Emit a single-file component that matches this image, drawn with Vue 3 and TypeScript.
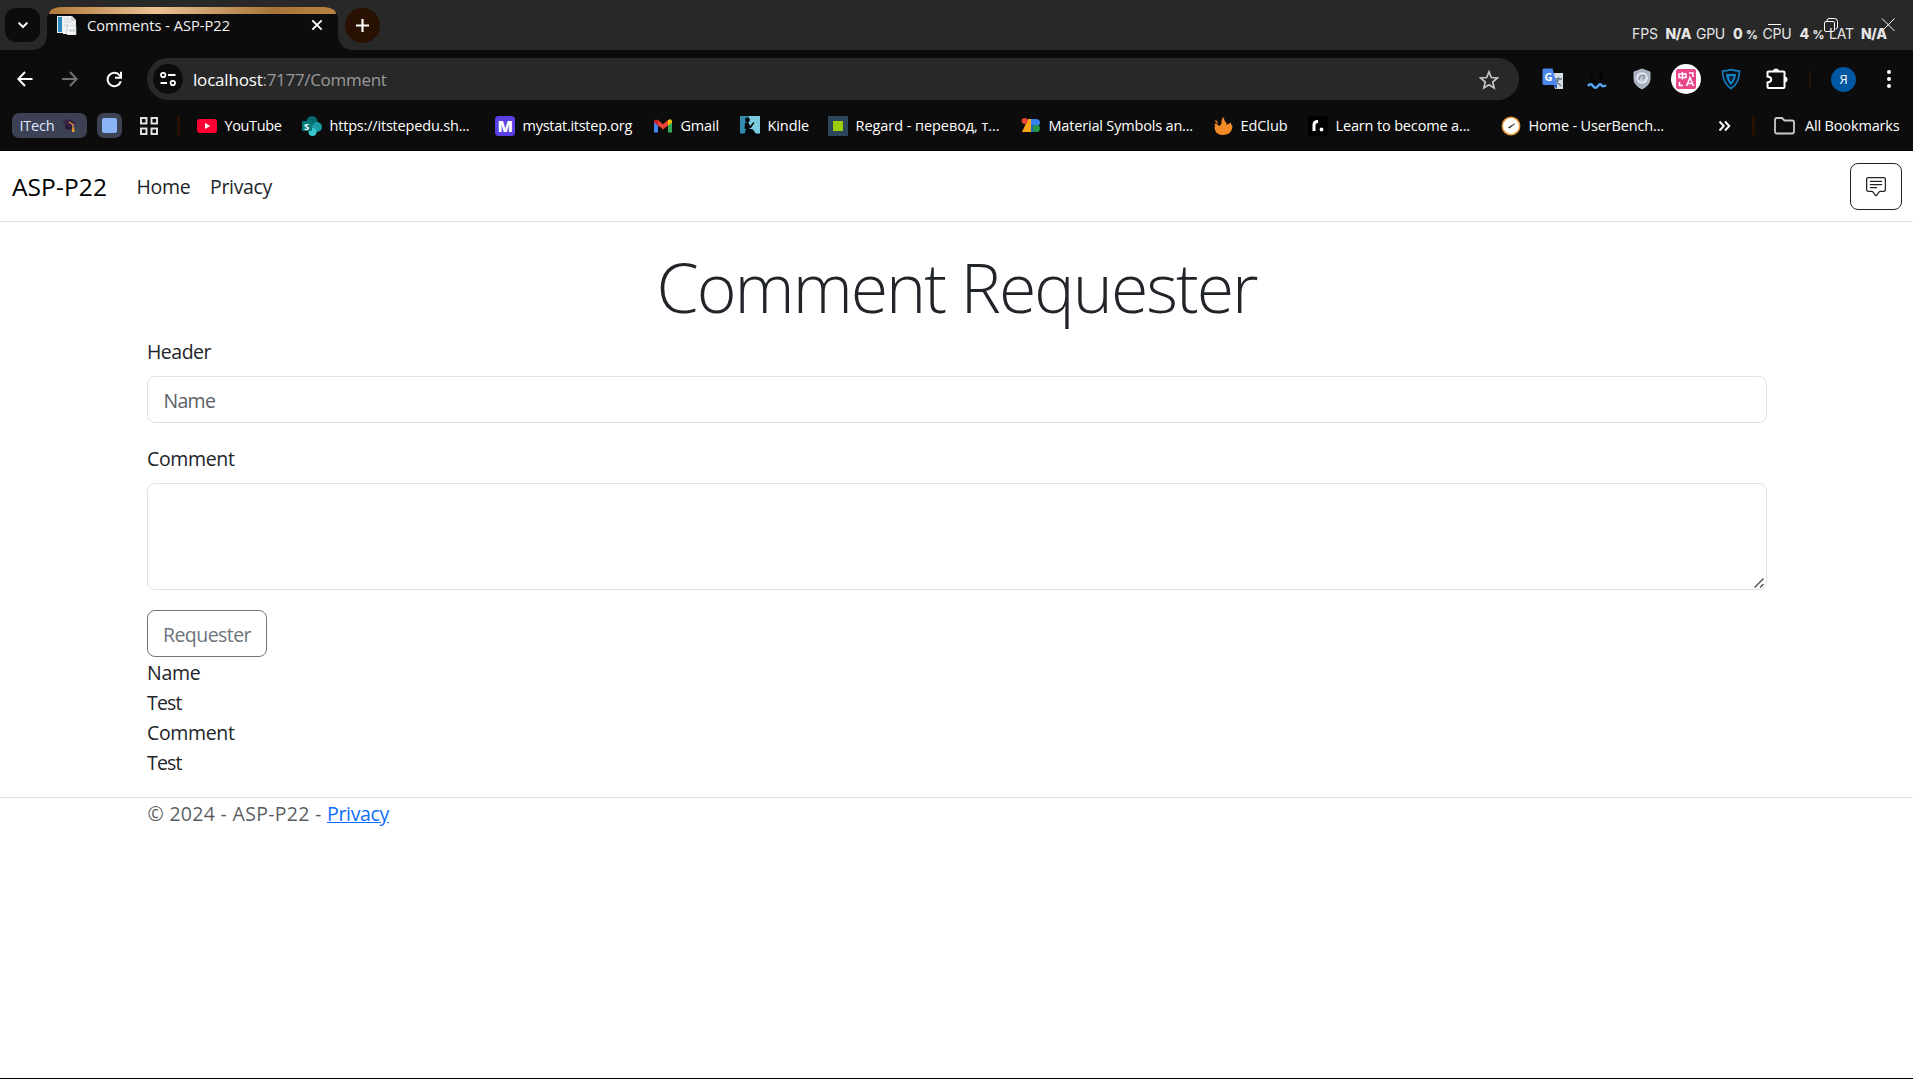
<script setup lang="ts">
import { ref } from 'vue'

interface Bookmark {
  icon: string
  label: string
  pitch: number
  text: number
}

const bookmarks: Bookmark[] = [
  { icon: 'youtube', label: 'YouTube', pitch: 105, text: 57 },
  { icon: 'sharepoint', label: 'https://itstepedu.sh...', pitch: 193, text: 140 },
  { icon: 'mystat', label: 'mystat.itstep.org', pitch: 158, text: 109.5 },
  { icon: 'gmail', label: 'Gmail', pitch: 87, text: 38.5 },
  { icon: 'kindle', label: 'Kindle', pitch: 88, text: 41.5 },
  { icon: 'regard', label: 'Regard - перевод, т...', pitch: 193, text: 144 },
  { icon: 'material', label: 'Material Symbols an...', pitch: 192, text: 144.5 },
  { icon: 'edclub', label: 'EdClub', pitch: 95, text: 47 },
  { icon: 'roadmap', label: 'Learn to become a...', pitch: 193, text: 134.5 },
  { icon: 'bench', label: 'Home - UserBench...', pitch: 217, text: 135.5 },
]

const header = ref('')
const comment = ref('')
const rows = ['Name', 'Test', 'Comment', 'Test']

// Spreads the letters of a label so that it takes up the given width.
const vFit = {
  mounted(el: HTMLElement, binding: { value: number }) {
    const count = (el.textContent ?? '').length
    const natural = el.getBoundingClientRect().width
    el.style.letterSpacing = `${(binding.value - natural) / count}px`
  },
}
</script>

<template>
  <div class="window">
    <div class="tabstrip">
      <button class="tab-search">
        <svg width="12" height="12" viewBox="0 0 12 12"><path d="M1.6 3.6 6 8l4.400-4.400" fill="none" stroke="#fff" stroke-width="2" /></svg>
      </button>
      <div class="tab">
        <div class="tab-theme"></div>
        <div class="tab-row">
          <svg class="favicon" width="20" height="20" viewBox="0 0 20 20">
            <path d="M0 1h12v17H0z" fill="#e6eef2" /><path d="M1 2h4v15H1z" fill="#2f88bd" />
            <path d="M5 1h10l4 4v14H6z" fill="#eef1f2" /><path d="M14 1v5h5" fill="#c8cdd0" />
            <path d="M7 4h5M7 7h7M7 10h4" stroke="#c7d1d6" /><path d="M10 11h9v9h-9z" fill="#f8f8f8" stroke="#bcc4c8" stroke-width=".7" /><path d="M12 14h6v3h-6z" fill="#d5dadd" />
          </svg>
          <span class="tab-title"><span v-fit="143" class="fit">Comments - ASP-P22</span></span>
          <svg class="tab-close" width="12" height="12" viewBox="0 0 12 12"><path d="m1.300 1.300 9.400 9.400M10.700 1.300l-9.400 9.400" stroke="#fff" stroke-width="1.900" /></svg>
        </div>
      </div>
      <button class="new-tab">
        <svg width="13" height="13" viewBox="0 0 13 13"><path d="M6.500 0v13M0 6.500h13" stroke="#fff" stroke-width="2.200" /></svg>
      </button>
      <div class="caption-buttons">
        <svg width="127" height="14" viewBox="0 0 127 14" fill="none" stroke="#fff">
          <path d="M0 6.500h13" />
          <rect x="56.500" y="3.500" width="10" height="10" rx="1.500" />
          <path d="M59 3.500V2.500Q59 .5 61 .5h5.500q3 0 3 3V9q0 2-2 2" />
          <path d="m114 .5 12.500 12.500M126.500.5 114 13" />
        </svg>
      </div>
      <div class="stats">
        <span class="metric fps"><span v-fit="26" class="fit">FPS</span></span>
        <b class="na"><span v-fit="25.500" class="fit">N/A</span></b>
        <span class="metric gpu"><span v-fit="29" class="fit">GPU</span></span>
        <b class="num">0</b><b class="pct">%</b>
        <span class="metric cpu"><span v-fit="29" class="fit">CPU</span></span>
        <b class="num">4</b><b class="pct">%</b>
        <span class="metric lat"><span v-fit="25" class="fit">LAT</span></span>
        <b class="na"><span v-fit="25.500" class="fit">N/A</span></b>
      </div>
    </div>

    <div class="toolbar">
      <svg class="nav" width="16" height="16" viewBox="0 0 16 16"><path d="M15.500 8H1.500M8 1 1.300 8 8 15" fill="none" stroke="#fff" stroke-width="2" /></svg>
      <svg class="nav" width="16" height="16" viewBox="0 0 16 16"><path d="M0 8h14M8 1l6.700 7L8 15" fill="none" stroke="#727272" stroke-width="2" /></svg>
      <svg class="nav" width="17" height="17" viewBox="0 0 17 17"><path d="M14.800 10.300A6.700 6.700 0 1 1 13.700 4.500L15 6" fill="none" stroke="#fff" stroke-width="2" /><path d="M15 .8v6H9" fill="none" stroke="#fff" stroke-width="2" /></svg>
      <div class="omnibox">
        <span class="site-info">
          <svg width="16" height="16" viewBox="0 0 16 16" fill="none" stroke="#fff" stroke-width="1.800"><circle cx="3.200" cy="4" r="2.200" /><path d="M8 4h7.500M.5 12H7" /><circle cx="12.800" cy="12" r="2.200" /></svg>
        </span>
        <span class="url"><span v-fit="69.500" class="fit host">localhost</span><span v-fit="124" class="fit">:7177/Comment</span></span>
        <svg class="star" width="20" height="20" viewBox="0 0 20 20"><path d="m10 1.800 2.300 5.700 6.100.5-4.700 4 1.500 6L10 14.800 4.800 18l1.500-6-4.700-4 6.100-.5z" fill="none" stroke="#c4c4c4" stroke-width="1.700" /></svg>
      </div>
      <div class="extensions">
        <svg width="22" height="22" viewBox="0 0 22 22"><path d="M9 5h12v16H13z" fill="#d7dde2" /><path d="M13 11h7M16.500 9v2c-.5 3-2 5-4 6M14 12c1 3 3 4 5 6" fill="none" stroke="#60788c" stroke-width="1.300" /><path d="m11 17 4 4v-4z" fill="#2453b5" /><path d="M2 .5h8.500L15 17H2q-1.500 0-1.500-1.500V2Q.5.5 2 .5" fill="#4c87ed" /><text x="2.500" y="13" font-size="11" font-weight="700" fill="#fff">G</text></svg>
        <svg class="lt" width="20" height="24" viewBox="0 0 20 24"><text x="2.500" y="15" font-size="13" font-weight="700" fill="#030303">LT</text><path d="M1 19q2.500-3.500 5 0t5 0q2.500-3.500 4 0 2 1 4-1" fill="none" stroke="#55a9f5" stroke-width="2.400" /></svg>
        <svg width="18" height="22" viewBox="0 0 18 22"><path d="m9 1 8 3v7q0 6-8 10-8-4-8-10V4z" fill="#a8b0c2" stroke="#d0d4df" stroke-width=".8" /><circle cx="9" cy="10" r="5" fill="#c3c9d7" stroke="#eef1f7" stroke-width="1.500" /><path d="M6 12a4 4 0 0 1 6-4l-2 3" fill="none" stroke="#8e98ac" stroke-width="1.500" /></svg>
        <span class="translate">
          <svg width="20" height="20" viewBox="0 0 20 20"><rect width="20" height="20" rx="2" fill="#e9478c" /><path d="M3 5h7v3.500H3zM6.500 3v7.500M13 4h4v4M3.500 13v3.500h3.500M10.500 17l3.500-8.500 3.500 8.500M12 14.500h4" fill="none" stroke="#fff" stroke-width="1.500" /></svg>
        </span>
        <svg width="20" height="22" viewBox="0 0 20 22"><path d="M10 1.500q5 1.500 8.500 1.500 0 12-8.500 17.500Q1.500 15 1.500 3 6 3 10 1.500" fill="#08131c" stroke="#1683c8" stroke-width="1.500" /><path d="M5 6h10q-.5 7-5 11Q5.500 13 5 6" fill="#1683c8" /><path d="M8 8h4.500q0 3-2.500 6-2-2-2-6" fill="#10212d" /></svg>
        <svg class="puzzle" width="22" height="22" viewBox="0 0 22 22"><path d="M2.500 3.500h15q1 0 1 1v14.500q0 1-1 1h-15q-1 0-1-1v-4.500c5-.5 5-5.500 0-6V4.500q0-1 1-1" fill="none" stroke="#fff" stroke-width="2" /><path d="M7 3.500a3 3 0 0 1 6 0M18.500 8.500a3 3 0 0 1 0 6" fill="#fff" /></svg>
        <i class="divider"></i>
        <span class="avatar">Я</span>
        <svg width="6" height="20" viewBox="0 0 6 20" fill="#fff"><circle cx="3" cy="3" r="2" /><circle cx="3" cy="10" r="2" /><circle cx="3" cy="17" r="2" /></svg>
      </div>
    </div>

    <div class="bookmarks">
      <span class="group"><span v-fit="35" class="fit">ITech</span>
        <svg width="15" height="15" viewBox="0 0 15 15"><path d="m0 4 7-3 8 4-7 3.500z" fill="#3b2144" /><path d="M3 6v4q3 3 7 1V7L8 8.500z" fill="#2c1936" /><path d="m7 4 4 2.500v6" fill="none" stroke="#e9a23b" stroke-width="1.200" /><path d="M10.300 10h1.800l.5 4H10z" fill="#e99a2d" /></svg>
      </span>
      <span class="group square"><i></i></span>
      <svg class="apps" width="18" height="18" viewBox="0 0 18 18" fill="none" stroke="#e8e8e8" stroke-width="1.900"><rect x="1" y="1" width="5.500" height="5.500" /><rect x="11.500" y="1" width="5.500" height="5.500" /><rect x="1" y="11.500" width="5.500" height="5.500" /><rect x="11.500" y="11.500" width="5.500" height="5.500" /></svg>
      <i class="divider"></i>
      <div class="links">
        <span v-for="b in bookmarks" :key="b.label" class="link" :style="{ width: b.pitch + 'px' }">
          <svg width="20" height="20" viewBox="0 0 20 20">
            <template v-if="b.icon === 'youtube'"><rect y="3" width="20" height="14" rx="3" fill="#ff0033" /><path d="m8 7 5.300 3L8 13z" fill="#fff" /></template>
            <template v-else-if="b.icon === 'sharepoint'"><circle cx="10" cy="5.500" r="5.500" fill="#036c70" /><circle cx="15" cy="11" r="5" fill="#1a9ba1" /><circle cx="10.500" cy="16" r="4" fill="#37c6d0" /><rect y="5" width="10" height="10" rx="1" fill="#03787c" /><text x="2" y="13.500" font-size="9.500" font-weight="700" fill="#fff">S</text></template>
            <template v-else-if="b.icon === 'mystat'"><rect width="20" height="20" rx="3.500" fill="#5840e5" /><text x="2.600" y="15.600" font-size="16" font-weight="800" fill="#fff">M</text></template>
            <template v-else-if="b.icon === 'gmail'"><path d="M1 5v11.500h4V8z" fill="#4285f4" /><path d="M19 5v11.500h-4V8z" fill="#34a853" /><path d="m1 5 4-1 5 4.200L15 4v5.500l-5 4-5-4V9L1 6z" fill="#ea4335" /><path d="M15 4q3-2 4 1v1.500l-4 3z" fill="#fbbc04" /><path d="M1 6q0-3 2.500-2.500L5 4.500v5L1 6.500z" fill="#c5221f" /></template>
            <template v-else-if="b.icon === 'kindle'"><rect width="20" height="20" fill="#328caf" /><path d="M9 0h11v18H8z" fill="#7dcbe0" /><path d="M0 17.500h20V20H0z" fill="#04080b" /><circle cx="7.500" cy="4" r="2.400" fill="#04080b" /><path d="M5 6.500h3.500l1.500 3.500 3.500-4 1 .8-3.500 5.200-2.500.5 4.500 1 3 4.500H4.500l1.500-5-1.500-.5z" fill="#04080b" /></template>
            <template v-else-if="b.icon === 'regard'"><rect width="20" height="20" fill="#2b465b" /><rect x="5" y="5" width="10" height="10" fill="#9bcd08" /></template>
            <template v-else-if="b.icon === 'material'"><path d="M7 3h3v13H1z" fill="#f9a514" /><circle cx="3.600" cy="5" r="3" fill="#ea4335" /><path d="M10 3h5q4 0 4 3.500T15 10h-5z" fill="#3680ed" /><path d="M10 9h4v7h-4z" fill="#1967d2" /><circle cx="15.200" cy="12.400" r="3.700" fill="#249445" /></template>
            <template v-else-if="b.icon === 'edclub'"><path d="M1.500 7.500q2.500-.5 4.500 2.500 3-1 2.500-5Q9 1.500 11.500 1q-1.500 2 .3 4 2.700 2 1.700 4l4.500-2.500q-.5 2 1.500 3.500-.5 8.500-9 9-8 .5-9-7 1-1 0-4.500" fill="#f28a25" /><path d="M2 4q3 0 3 4-3-1-3-4" fill="#bc5b22" /></template>
            <template v-else-if="b.icon === 'roadmap'"><rect width="20" height="20" rx="2" fill="#000" /><path d="M6 15V9q0-3.500 4-3.500" fill="none" stroke="#fff" stroke-width="3" /><circle cx="13.500" cy="13.500" r="1.900" fill="#fff" /></template>
            <template v-else><circle cx="10" cy="10" r="8.700" fill="#fff" stroke="#e79a3c" stroke-width="1.500" /><path d="m7.500 11.500 6-3.500-5 4z" fill="#222" stroke="#222" stroke-width=".7" /></template>
          </svg>
          <span v-fit="b.text" class="fit">{{ b.label }}</span>
        </span>
      </div>
      <svg class="more" width="13" height="12" viewBox="0 0 13 12"><path d="m1.500 1.500 4.300 4.500-4.300 4.500M7 1.500 11.300 6 7 10.500" fill="none" stroke="#fff" stroke-width="1.900" /></svg>
      <i class="divider late"></i>
      <svg class="folder" width="21" height="18" viewBox="0 0 21 18"><path d="M1 3q0-2 2-2h5l2.500 2.500H18q2 0 2 2V14.500q0 2-2 2H3q-2 0-2-2z" fill="none" stroke="#c9c9c9" stroke-width="1.800" /></svg>
      <span v-fit="94.500" class="fit">All Bookmarks</span>
    </div>

    <nav class="navbar">
      <a class="brand"><span v-fit="95" class="fit">ASP-P22</span></a>
      <a class="home"><span v-fit="54" class="fit">Home</span></a>
      <a class="privacy"><span v-fit="62" class="fit">Privacy</span></a>
      <button class="chat">
        <svg width="20" height="20" viewBox="0 0 16 16" fill="#212529"><path d="M14 1a1 1 0 0 1 1 1v8a1 1 0 0 1-1 1h-2.500a2 2 0 0 0-1.600.8L8 14.333 6.100 11.800a2 2 0 0 0-1.600-.8H2a1 1 0 0 1-1-1V2a1 1 0 0 1 1-1zM2 0a2 2 0 0 0-2 2v8a2 2 0 0 0 2 2h2.500a1 1 0 0 1 .8.4l1.900 2.533a1 1 0 0 0 1.600 0l1.900-2.533a1 1 0 0 1 .8-.4H14a2 2 0 0 0 2-2V2a2 2 0 0 0-2-2z" /><path d="M3 3.500a.5.5 0 0 1 .5-.5h9a.5.5 0 0 1 0 1h-9a.5.5 0 0 1-.5-.5M3 6a.5.5 0 0 1 .5-.5h9a.5.5 0 0 1 0 1h-9A.5.5 0 0 1 3 6m0 2.500a.5.5 0 0 1 .5-.5h5a.5.5 0 0 1 0 1h-5a.5.5 0 0 1-.5-.5" /></svg>
      </button>
    </nav>

    <main>
      <h1><span v-fit="600" class="fit">Comment Requester</span></h1>
      <label class="first"><span v-fit="64" class="fit">Header</span></label>
      <input v-model="header" type="text" placeholder="Name" />
      <label class="second"><span v-fit="87.500" class="fit">Comment</span></label>
      <div class="area">
        <textarea v-model="comment"></textarea>
        <svg class="grip" width="12" height="12" viewBox="0 0 12 12"><path d="m1.500 10.500 9-9M7 10.500l3.500-3.500" stroke="#555" stroke-width="1.500" /></svg>
      </div>
      <button class="request"><span v-fit="88" class="fit">Requester</span></button>
      <div class="rows">
        <div v-for="(row, i) in rows" :key="i" class="row"><span v-fit="row === 'Comment' ? 87.500 : row === 'Name' ? 53.500 : 34.500" class="fit">{{ row }}</span></div>
      </div>
    </main>
    <footer>
      <span v-fit="179.500" class="fit">© 2024 - ASP-P22 - </span><a><span v-fit="62" class="fit">Privacy</span></a>
    </footer>
  </div>
</template>

<style>
body {
  margin: 0;
  overflow: hidden;
}
</style>

<style scoped>
* {
  box-sizing: border-box;
}
.window {
  height: 1079px;
  display: flex;
  flex-direction: column;
  background: #fff;
  border-bottom: 1px solid #000;
  color: #212529;
  font-family: "Open Sans", "Noto Sans", sans-serif;
  font-size: 19.5px;
  line-height: 30px;
  position: relative;
}
button {
  padding: 0;
  border: 0;
  font: inherit;
  display: flex;
  align-items: center;
  justify-content: center;
}
svg {
  flex: none;
  display: block;
}
.fit {
  display: inline-block;
  white-space: pre;
  flex: none;
}

.tabstrip {
  height: 50px;
  flex: none;
  background: #282828;
  display: flex;
  position: relative;
}
.tab-search {
  width: 35px;
  height: 34px;
  margin: 8px 0 0 5px;
  border-radius: 11px;
  background: #0c0c0c;
}
.tab {
  width: 291px;
  height: 43px;
  margin: 7px 0 0 7px;
  background: #0c0c0c;
  border-radius: 12px 12px 0 0;
  position: relative;
}
.tab::before,
.tab::after {
  content: "";
  position: absolute;
  bottom: 0;
  width: 14px;
  height: 14px;
}
.tab::before {
  left: -14px;
  background: radial-gradient(circle at 0 0, transparent 13.500px, #0c0c0c 14px);
}
.tab::after {
  right: -14px;
  background: radial-gradient(circle at 100% 0, transparent 13.500px, #0c0c0c 14px);
}
.tab-theme {
  height: 7px;
  border-radius: 12px 12px 0 0 / 7px 7px 0 0;
  margin: 0 2px;
  background: linear-gradient(90deg, #b07839, #ebc394 37%, #a87539 78%, #b9813f);
}
.tab-row {
  display: flex;
  align-items: center;
  height: 22px;
  padding-left: 10px;
  color: #f4f4f4;
  font-size: 14.600px;
}
.tab-title {
  width: 223px;
  padding-left: 10px;
  flex: none;
}
.tab-close {
  margin-left: 11px;
}
.new-tab {
  width: 35px;
  height: 35px;
  margin: 8px 0 0 7px;
  border-radius: 50%;
  background: #281002;
}
.caption-buttons {
  position: absolute;
  left: 1768px;
  top: 18px;
}
.stats {
  position: absolute;
  left: 1632px;
  top: 24px;
  display: flex;
  align-items: baseline;
  line-height: 19px;
  font-family: Inter, sans-serif;
  font-size: 14px;
  color: #e6e6e6;
  white-space: nowrap;
}
.fps {
  width: 33.500px;
}
.na {
  width: 30.500px;
  font-weight: 800;
}
.gpu {
  width: 37px;
}
.cpu {
  width: 37px;
}
.lat {
  width: 32px;
}
.num {
  width: 13px;
  font-weight: 800;
}
.pct {
  width: 16.500px;
  font-size: 11.500px;
  font-weight: 800;
}

.toolbar {
  height: 58px;
  flex: none;
  background: #0c0c0c;
  display: flex;
  align-items: center;
  padding-left: 17px;
}
.nav {
  margin-right: 29px;
}
.nav:nth-child(2) {
  margin-right: 28px;
}
.nav:nth-child(3) {
  margin-right: 24px;
}
.omnibox {
  width: 1372px;
  height: 42px;
  border-radius: 21px;
  background: #282828;
  display: flex;
  align-items: center;
  padding: 0 20px 0 6px;
}
.site-info {
  width: 30px;
  height: 30px;
  border-radius: 50%;
  background: #0c0c0c;
  display: flex;
  align-items: center;
  justify-content: center;
}
.url {
  margin-left: 10px;
  padding-top: 1px;
  font-size: 17px;
  color: #9a9a9a;
  display: flex;
}
.host {
  color: #fff;
}
.star {
  margin: 1px 0 0 auto;
}
.extensions {
  display: flex;
  align-items: center;
  margin-left: 22.500px;
  gap: 24px;
}
.extensions .lt {
  margin-left: -0.5px;
}
.extensions svg:nth-child(3) {
  margin-left: 2px;
}
.translate {
  width: 30px;
  height: 30px;
  margin: 0 -4px;
  border-radius: 50%;
  background: #fff;
  display: flex;
  align-items: center;
  justify-content: center;
}
.puzzle {
  margin-left: 1px;
}
.avatar {
  width: 25px;
  height: 25px;
  margin-left: -4px;
  border-radius: 50%;
  background: #0057a2;
  color: #fff;
  font-size: 13px;
  line-height: 24px;
  text-align: center;
}
.avatar + svg {
  margin-left: 6px;
}
.divider {
  width: 3px;
  height: 19px;
  background: #281002;
  flex: none;
}
.extensions .divider {
  width: 2px;
  margin-left: -3px;
}

.bookmarks {
  height: 43px;
  flex: none;
  background: #0c0c0c;
  border-bottom: 1px solid #000;
  display: flex;
  align-items: center;
  padding: 0 0 7px 12px;
  font-size: 14.500px;
  line-height: 20px;
  color: #fff;
}
.group {
  width: 75px;
  height: 25px;
  border-radius: 7px;
  background: #3c4254;
  color: #dce7ff;
  display: flex;
  align-items: center;
  padding: 0 10px 0 7.500px;
  justify-content: space-between;
  flex: none;
}
.square {
  width: 25px;
  margin-left: 10px;
  padding: 5px;
}
.square i {
  width: 15px;
  height: 15px;
  border-radius: 2px;
  background: #8ab4f8;
}
.apps {
  margin: 0 19px 0 18px;
}
.links {
  display: flex;
  margin-left: 17px;
}
.link {
  display: flex;
  align-items: center;
  gap: 7.500px;
  flex: none;
}
.late {
  margin: 0 19px 0 21px;
}
.folder {
  margin-right: 10px;
}

.navbar {
  height: 71px;
  flex: none;
  border-bottom: 1px solid #dee2e6;
  display: flex;
  align-items: center;
  padding: 0 11px 0 12px;
}
.brand {
  width: 124.500px;
  padding-top: 2px;
  font-size: 24.500px;
  color: #000;
}
.home {
  width: 73.500px;
  padding-top: 2px;
}
.privacy {
  padding-top: 2px;
}
.chat {
  width: 52px;
  height: 47px;
  margin-left: auto;
  padding-top: 1px;
  border: 1px solid #212529;
  border-radius: 8px;
  background: #fff;
}

main {
  width: 1620px;
  margin: 0 auto;
  padding-top: 20px;
  display: flex;
  flex-direction: column;
}
h1 {
  margin: 0 0 5px;
  height: 90px;
  font-size: 68px;
  line-height: 90px;
  font-weight: 300;
  text-align: center;
}
label {
  height: 30px;
  padding-left: 0.5px;
}
input {
  height: 47px;
  margin: 9px 0 21px;
  padding: 2px 16px 0;
  border: 1px solid #dee2e6;
  border-radius: 8px;
  font: inherit;
  outline: 0;
}
input::placeholder {
  color: #5c6166;
  letter-spacing: -0.7px;
}
.area {
  height: 107px;
  margin: 9px 0 20px;
  position: relative;
}
textarea {
  display: block;
  width: 100%;
  height: 100%;
  padding: 8px 16px;
  border: 1px solid #dee2e6;
  border-radius: 8px;
  font: inherit;
  resize: none;
  outline: 0;
}
.grip {
  position: absolute;
  right: 2px;
  bottom: 1px;
}
.request {
  width: 120px;
  height: 47px;
  padding: 2px 0 0 1px;
  border: 1px solid #6c757d;
  border-radius: 8px;
  background: #fff;
  color: #6c757d;
}
.rows {
  padding: 1px 0 0 0.5px;
}
.row {
  height: 30px;
}
footer {
  margin-top: 19px;
  padding: 1px 0 0 147.500px;
  border-top: 1px solid #dee2e6;
  color: rgba(33, 37, 41, 0.75);
  display: flex;
}
footer a {
  color: #0d6efd;
}
footer a .fit {
  text-decoration: underline;
}
</style>
